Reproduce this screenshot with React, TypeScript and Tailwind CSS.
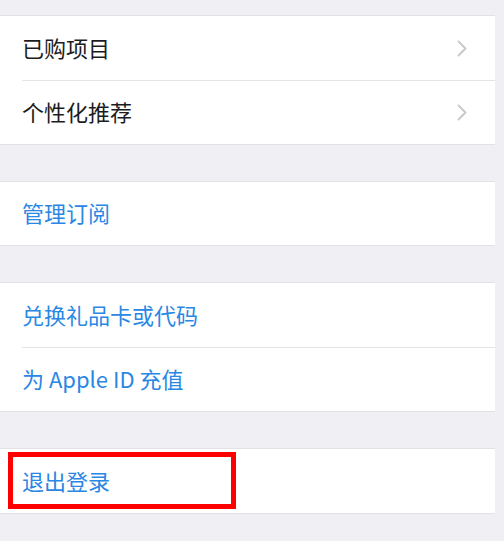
import React from 'react'

const font = { fontFamily: '"Noto Sans CJK SC", "Noto Sans", sans-serif' }

function Chevron() {
  return (
    <svg width="10" height="17" viewBox="0 0 10 17" fill="none">
      <polyline points="1.5,1.5 8.5,8.5 1.5,15.5" stroke="#c7c7cc" strokeWidth="1.8" strokeLinecap="round" strokeLinejoin="round" />
    </svg>
  )
}

function Row({ label, blue, arrow, h = 'h-[64px]', children }: { label: string; blue?: boolean; arrow?: boolean; h?: string; children?: React.ReactNode }) {
  return (
    <div className={`relative flex items-center justify-between pl-[22px] pr-[28px] ${h}`}>
      <span className={`pb-[3px] text-[22px] leading-none ${blue ? 'text-[#2a87e4]' : 'text-[#1c1c1e]'}`}>{label}</span>
      {arrow && <Chevron />}
      {children}
    </div>
  )
}

function Sep() {
  return <div className="ml-[22px] h-px bg-[#e3e3e8]" />
}

function Group({ children, className = '' }: { children: React.ReactNode; className?: string }) {
  return <div className={`mr-[9px] border-y border-[#e1e1e6] bg-white ${className}`}>{children}</div>
}

export default function App() {
  return (
    <div className="flex h-[541px] w-[504px] flex-col bg-[#efeff4] pt-[15px]" style={font}>
      <Group>
        <Row label="已购项目" arrow />
        <Sep />
        <Row label="个性化推荐" arrow h="h-[63px]" />
      </Group>

      <Group className="mt-[36px]">
        <Row label="管理订阅" blue h="h-[63px]" />
      </Group>

      <Group className="mt-[36px]">
        <Row label="兑换礼品卡或代码" blue />
        <Sep />
        <Row label="为 Apple ID 充值" blue h="h-[63px]" />
      </Group>

      <Group className="mt-[36px]">
        <Row label="退出登录" blue>
          {/* red highlight box */}
          <div className="absolute left-[8px] top-[3px] h-[57px] w-[228px] border-[5px] border-[#ff0000]" />
        </Row>
      </Group>
    </div>
  )
}
